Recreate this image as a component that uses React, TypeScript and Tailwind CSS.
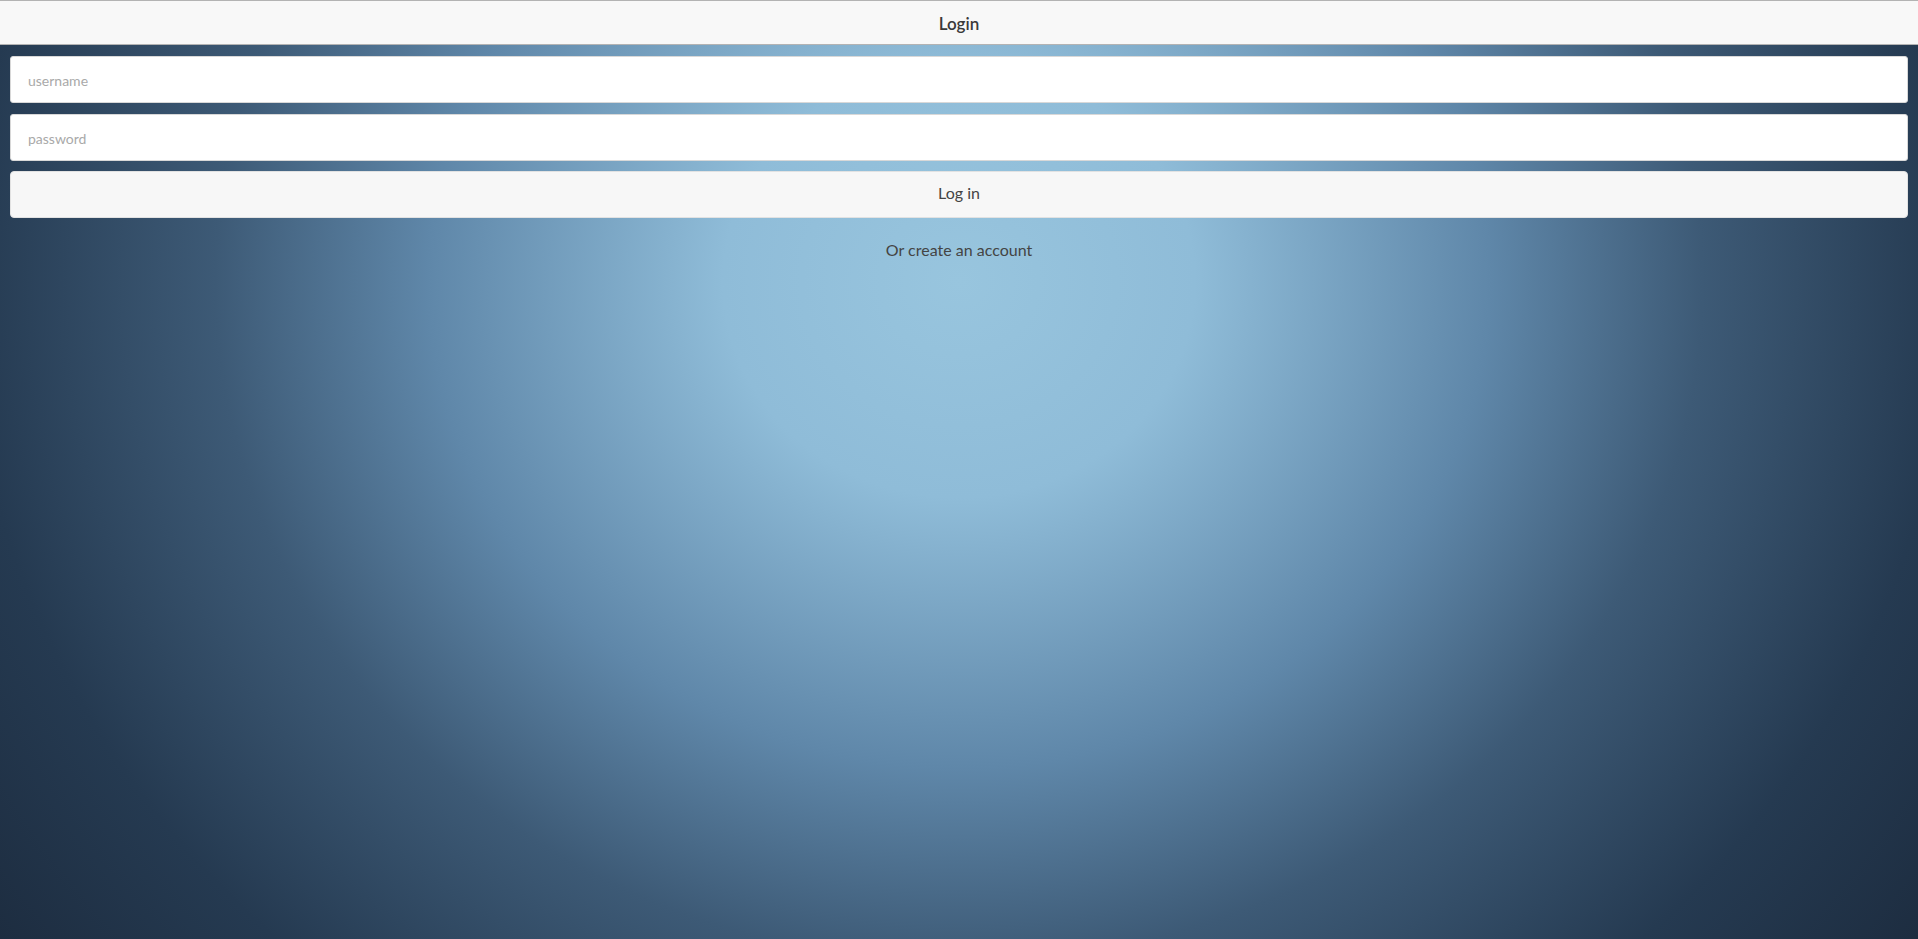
import React, { useState } from 'react'

const App = () => {
  const [username, setUsername] = useState('');
  const [password, setPassword] = useState('');

  return (
    <div className="min-h-screen w-full bg-[#2c4259] bg-[radial-gradient(ellipse_1180px_1080px_at_50%_30%,#98c5de_0%,#8fbcd8_20%,#5f87a9_45%,#3d5a76_63%,#253a51_84%,#1c2b3e_104%)] font-['Lato','Liberation_Sans',sans-serif] text-[#333]">
      {/* header */}
      <div className="h-[45px] border-t border-b border-[#b3b3b3] bg-[#f8f8f8] flex items-center justify-center pt-[2px]">
        <span className="text-[17px] font-semibold text-[#3a3a3a]">Login</span>
      </div>

      {/* form */}
      <form className="px-[10px] pt-[11px] flex flex-col" onSubmit={(e) => e.preventDefault()}>
        <input
          value={username}
          onChange={(e) => setUsername(e.target.value)}
          placeholder="username"
          className="h-[47px] w-full rounded-[3px] border border-[#d8d8d8] bg-white px-[17px] pt-[2px] text-[14px] text-[#333] outline-none placeholder:text-[#a9a9a9]"
        />
        <input
          type="password"
          value={password}
          onChange={(e) => setPassword(e.target.value)}
          placeholder="password"
          className="mt-[11px] h-[47px] w-full rounded-[3px] border border-[#d8d8d8] bg-white px-[17px] pt-[2px] text-[14px] text-[#333] outline-none placeholder:text-[#a9a9a9]"
        />
        <button
          type="submit"
          className="mt-[10px] h-[47px] w-full rounded-[4px] border border-[#e2e2e2] bg-[#f7f7f7] pb-[3px] text-[16px] text-[#444]"
        >
          Log in
        </button>
        <div className="mt-[21px] text-center text-[16px] leading-[22px] text-[#444]">Or create an account</div>
      </form>
    </div>
  )
}

export default App
